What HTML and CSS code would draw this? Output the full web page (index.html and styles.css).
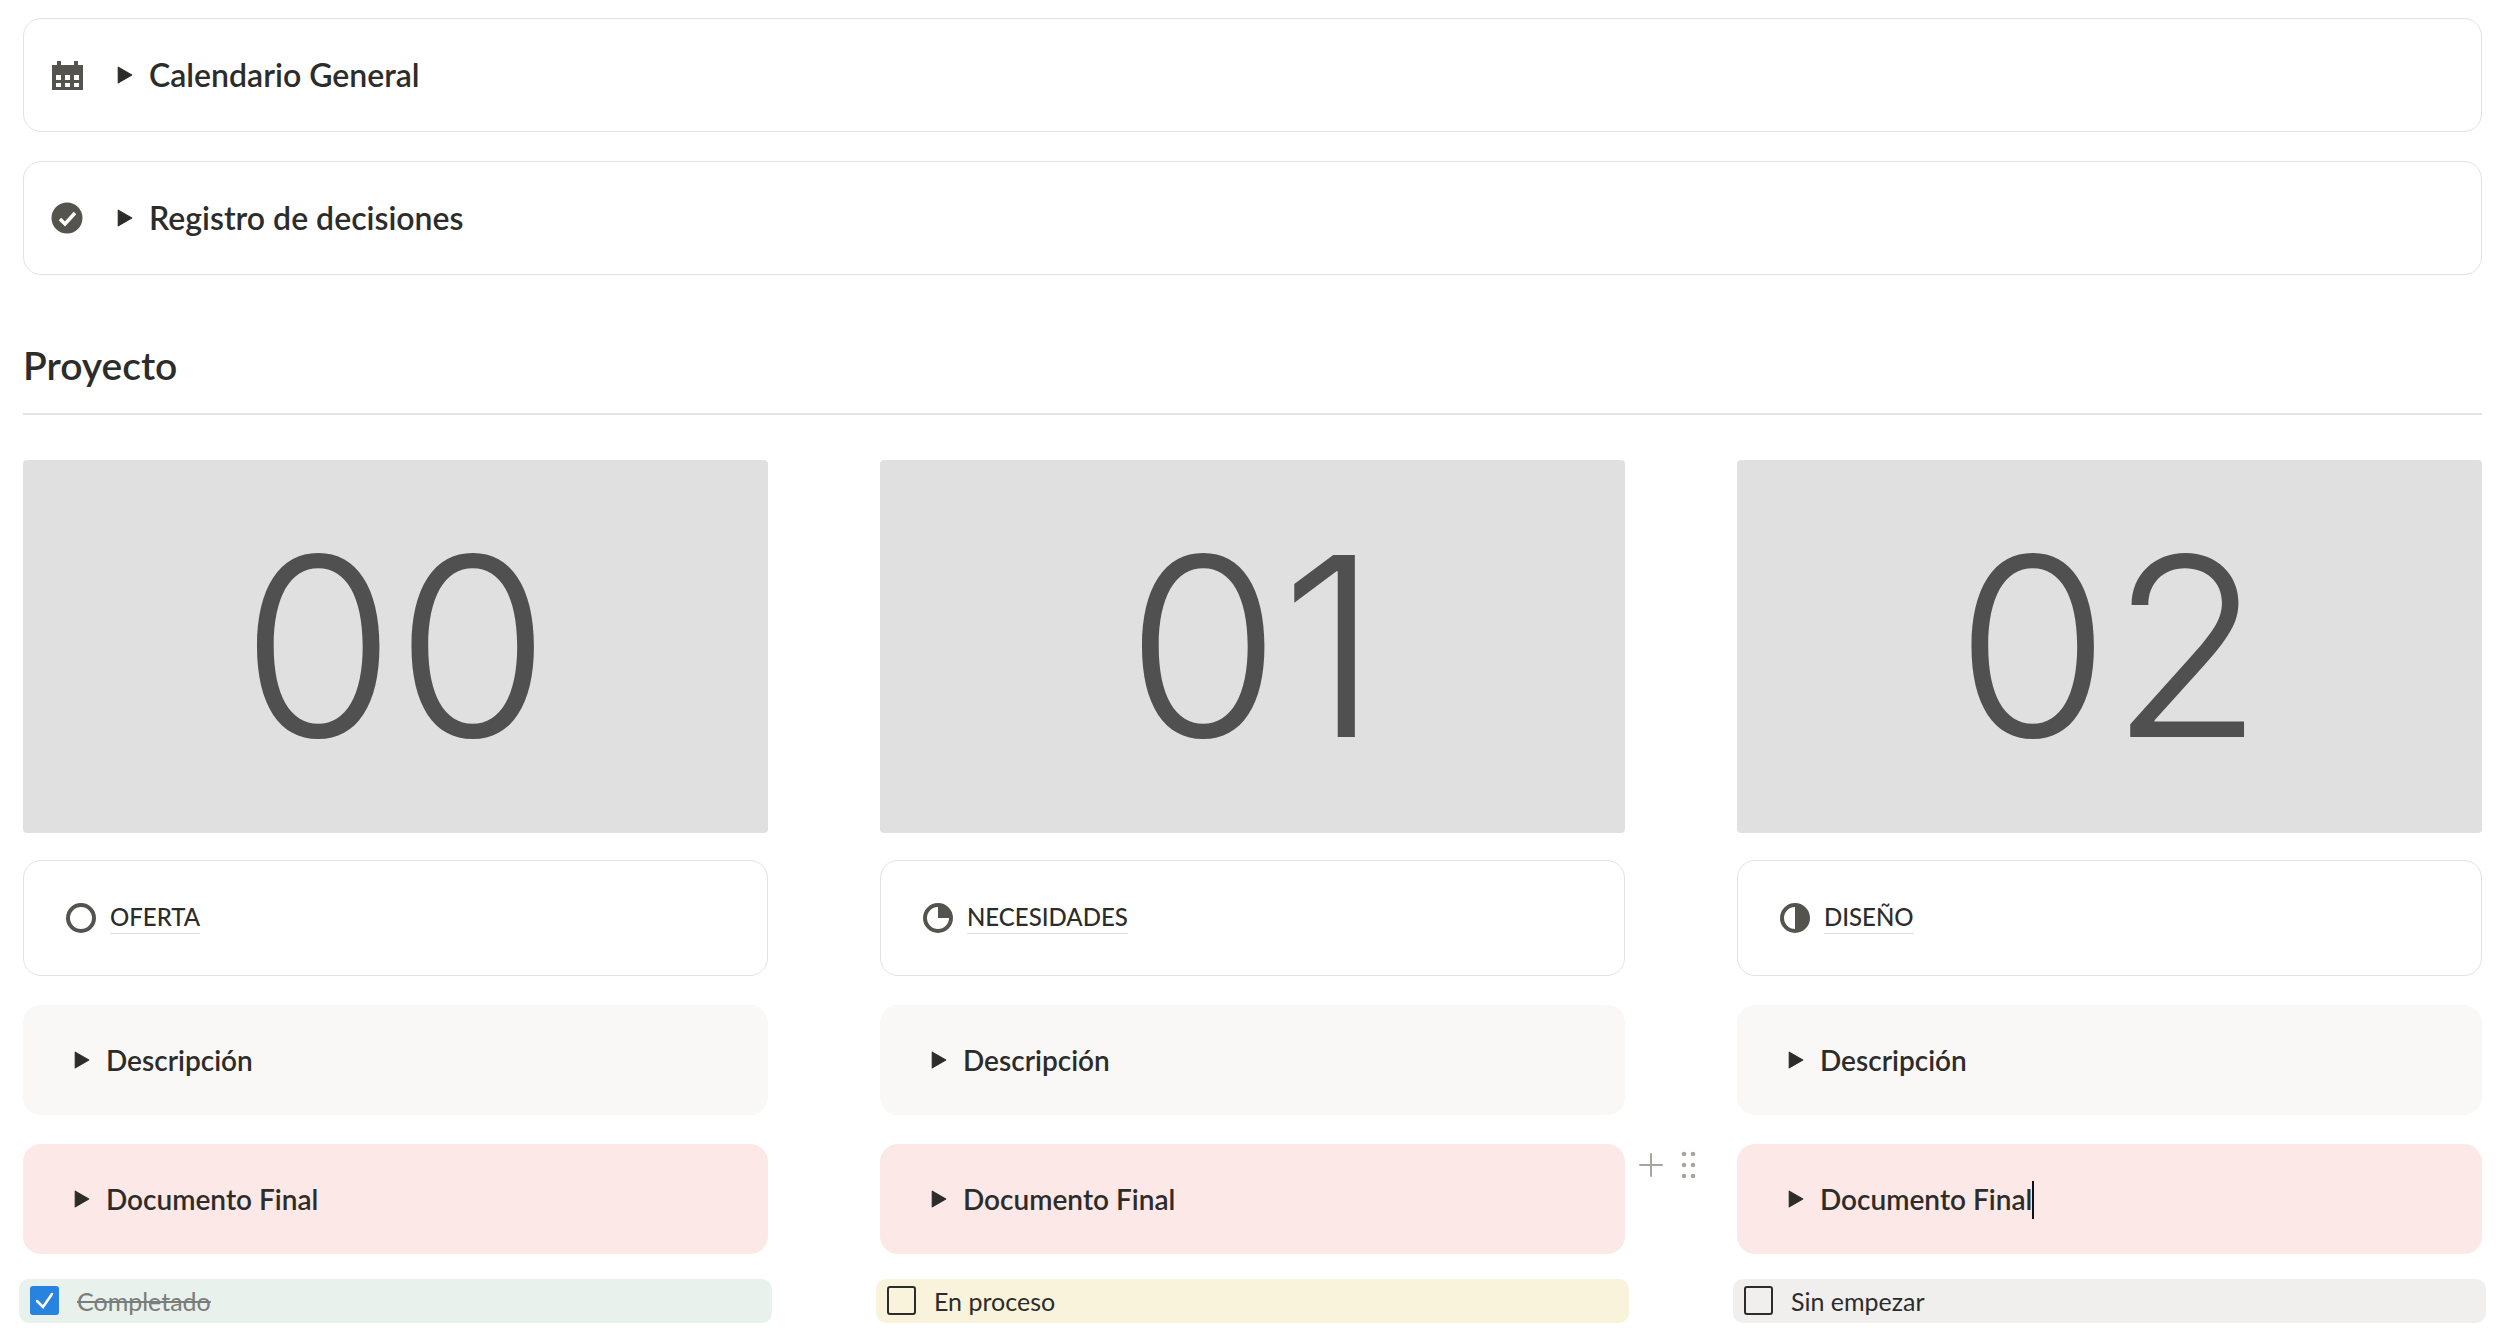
FILE: index.html
```html
<!DOCTYPE html>
<html lang="es">
<head>
  <meta charset="UTF-8">
  <meta name="viewport" content="width=device-width, initial-scale=1.0">
  <title>Proyecto</title>
  <link rel="stylesheet" href="styles.css">
</head>
<body>

  <main>
    <section class="callout outlined">
      <svg class="icon" viewBox="0 0 32 32" aria-hidden="true">
        <path fill="#55534e" fill-rule="evenodd" d="M6 2h4v4h13V2h4v4h5v25H1V6h5zM5 16v5h5v-5zM14 16v5h5v-5zM23 16v5h5v-5zM5 24v4h5v-4zM14 24v4h5v-4zM23 24v4h5v-4z"/>
      </svg>
      <details class="toggle large">
        <summary>
          <svg class="arrow" viewBox="0 0 14 16" aria-hidden="true"><path d="M1 1l12 7-12 7z"/></svg>
          <h2>Calendario General</h2>
        </summary>
      </details>
    </section>

    <section class="callout outlined">
      <svg class="icon" viewBox="0 0 32 32" aria-hidden="true">
        <circle cx="16" cy="16" r="15.5" fill="#55534e"/>
        <path d="M9 17l5 5 10-11" fill="none" stroke="#fff" stroke-width="3.5"/>
      </svg>
      <details class="toggle large">
        <summary>
          <svg class="arrow" viewBox="0 0 14 16" aria-hidden="true"><path d="M1 1l12 7-12 7z"/></svg>
          <h2>Registro de decisiones</h2>
        </summary>
      </details>
    </section>

    <h1>Proyecto</h1>
    <hr>

    <div class="columns">
      <section class="column">
        <div class="cover">00</div>
        <div class="callout outlined page">
          <svg class="icon" viewBox="0 0 32 32" aria-hidden="true">
            <circle cx="16" cy="16" r="13" fill="none" stroke="#55534e" stroke-width="4"/>
          </svg>
          <a href="#oferta">OFERTA</a>
        </div>
        <div class="callout gray">
          <details class="toggle">
            <summary>
              <svg class="arrow" viewBox="0 0 14 16" aria-hidden="true"><path d="M1 1l12 7-12 7z"/></svg>
              <h3>Descripción</h3>
            </summary>
          </details>
        </div>
        <div class="callout red">
          <details class="toggle">
            <summary>
              <svg class="arrow" viewBox="0 0 14 16" aria-hidden="true"><path d="M1 1l12 7-12 7z"/></svg>
              <h3>Documento Final</h3>
            </summary>
          </details>
        </div>
        <label class="todo green">
          <input type="checkbox" checked>
          <span>Completado</span>
        </label>
      </section>

      <section class="column">
        <div class="cover">01</div>
        <div class="callout outlined page">
          <svg class="icon" viewBox="0 0 32 32" aria-hidden="true">
            <circle cx="16" cy="16" r="13" fill="none" stroke="#55534e" stroke-width="4"/>
            <path d="M16 16V2a14 14 0 0 1 14 14z" fill="#55534e"/>
          </svg>
          <a href="#necesidades">NECESIDADES</a>
        </div>
        <div class="callout gray">
          <details class="toggle">
            <summary>
              <svg class="arrow" viewBox="0 0 14 16" aria-hidden="true"><path d="M1 1l12 7-12 7z"/></svg>
              <h3>Descripción</h3>
            </summary>
          </details>
        </div>
        <div class="callout red">
          <details class="toggle">
            <summary>
              <svg class="arrow" viewBox="0 0 14 16" aria-hidden="true"><path d="M1 1l12 7-12 7z"/></svg>
              <h3>Documento Final</h3>
            </summary>
          </details>
        </div>
        <label class="todo yellow">
          <input type="checkbox">
          <span>En proceso</span>
        </label>
      </section>

      <section class="column">
        <div class="cover">02</div>
        <div class="callout outlined page">
          <svg class="icon" viewBox="0 0 32 32" aria-hidden="true">
            <circle cx="16" cy="16" r="13" fill="none" stroke="#55534e" stroke-width="4"/>
            <path d="M16 2a14 14 0 0 1 0 28z" fill="#55534e"/>
          </svg>
          <a href="#diseno">DISEÑO</a>
        </div>
        <div class="callout gray">
          <details class="toggle">
            <summary>
              <svg class="arrow" viewBox="0 0 14 16" aria-hidden="true"><path d="M1 1l12 7-12 7z"/></svg>
              <h3>Descripción</h3>
            </summary>
          </details>
        </div>
        <div class="callout red">
          <!-- block handles, shown in the gutter -->
          <div class="handles">
            <button type="button" aria-label="Añadir bloque">
              <svg width="24" height="24" viewBox="0 0 24 24"><path d="M12 1v22M1 12h22" stroke="#a8a59f" stroke-width="2" stroke-linecap="round"/></svg>
            </button>
            <button type="button" aria-label="Mover bloque">
              <svg width="16" height="28" viewBox="0 0 16 28" fill="#a8a59f">
                <circle cx="4" cy="3" r="2.3"/><circle cx="13" cy="3" r="2.3"/>
                <circle cx="4" cy="14" r="2.3"/><circle cx="13" cy="14" r="2.3"/>
                <circle cx="4" cy="25" r="2.3"/><circle cx="13" cy="25" r="2.3"/>
              </svg>
            </button>
          </div>
          <details class="toggle">
            <summary>
              <svg class="arrow" viewBox="0 0 14 16" aria-hidden="true"><path d="M1 1l12 7-12 7z"/></svg>
              <h3 class="editing">Documento Final</h3>
            </summary>
          </details>
        </div>
        <label class="todo silver">
          <input type="checkbox">
          <span>Sin empezar</span>
        </label>
      </section>
    </div>
  </main>

</body>
</html>
```
FILE: styles.css
```css
* {
  box-sizing: border-box;
}

body {
  margin: 0;
  background: #fff;
  color: #2c2c2b;
  font-family: Lato, "Open Sans", sans-serif;
  font-size: 25px;
}

main {
  padding: 18px 18px 20px 23px;
}

h1, h2, h3 {
  margin: 0;
  font-weight: 600;
}

h1 {
  margin-top: 66px;
  font-size: 39px;
  line-height: 48px;
}

h2 {
  font-size: 32px;
  line-height: 40px;
}

h3 {
  font-size: 28px;
  line-height: 36px;
}

hr {
  height: 2px;
  margin: 24px 0 45px;
  border: none;
  background: #e4e3e0;
}

.callout {
  position: relative;
  display: flex;
  align-items: center;
  height: 110px;
  padding: 0 51px;
  border-radius: 18px;
}

.callout + .callout {
  margin-top: 29px;
}

.outlined {
  height: 114px;
  padding: 0 27px;
  border: 1px solid #e2e2e1;
}

.page {
  height: 116px;
  padding: 0 41px;
  gap: 13px;
}

.gray {
  background: #f9f8f7;
}

.red {
  background: #fce8e6;
}

.icon {
  flex: none;
  width: 32px;
  height: 32px;
}

.toggle summary {
  display: flex;
  align-items: center;
  gap: 16px;
  list-style: none;
  cursor: pointer;
}

.large {
  margin-left: 34px;
}

.arrow {
  flex: none;
  width: 16px;
  height: 18px;
  fill: #2c2c2b;
  stroke: #2c2c2b;
  stroke-width: 1;
  stroke-linejoin: round;
}

.page a {
  color: inherit;
  font-size: 24px;
  font-weight: 500;
  line-height: 32px;
  text-decoration: none;
  border-bottom: 1px solid #dededc;
}

.columns {
  display: grid;
  grid-template-columns: repeat(3, 1fr);
  gap: 112px;
}

.cover {
  display: flex;
  align-items: center;
  justify-content: center;
  aspect-ratio: 2 / 1;
  margin-bottom: 27px;
  border-radius: 4px;
  background: #e0e0e0;
  color: #505050;
  font-family: Inter, sans-serif;
  font-size: 250px;
  font-weight: 300;
  line-height: 1;
}

/* text cursor after the title */
.editing {
  position: relative;
}

.editing::after {
  content: "";
  position: absolute;
  top: 0;
  left: 100%;
  width: 2px;
  height: 38px;
  background: #111;
}

.handles {
  position: absolute;
  top: 0;
  right: 100%;
  display: flex;
  align-items: center;
  gap: 17px;
  height: 42px;
  padding-right: 41px;
}

.handles button {
  display: flex;
  padding: 0;
  border: none;
  background: none;
  cursor: pointer;
}

.todo {
  display: flex;
  align-items: center;
  gap: 18px;
  height: 44px;
  margin: 25px -4px 0;
  padding: 0 11px;
  border-radius: 10px;
}

.todo input {
  appearance: none;
  flex: none;
  width: 29px;
  height: 29px;
  margin: 0;
  border: 2px solid #2c2c2b;
  border-radius: 3px;
}

.todo input:checked {
  border: none;
  background: #2783de url("data:image/svg+xml,%3Csvg xmlns='http://www.w3.org/2000/svg' viewBox='0 0 29 29'%3E%3Cpath d='M7 15l6 6 9-13' fill='none' stroke='white' stroke-width='2.5' stroke-linecap='round'/%3E%3C/svg%3E");
}

.todo input:checked + span {
  color: #7a7d79;
  text-decoration: line-through;
}

.green {
  background: #e8f1ec;
}

.yellow {
  background: #f9f3dc;
}

.silver {
  background: #f0efed;
}
```
